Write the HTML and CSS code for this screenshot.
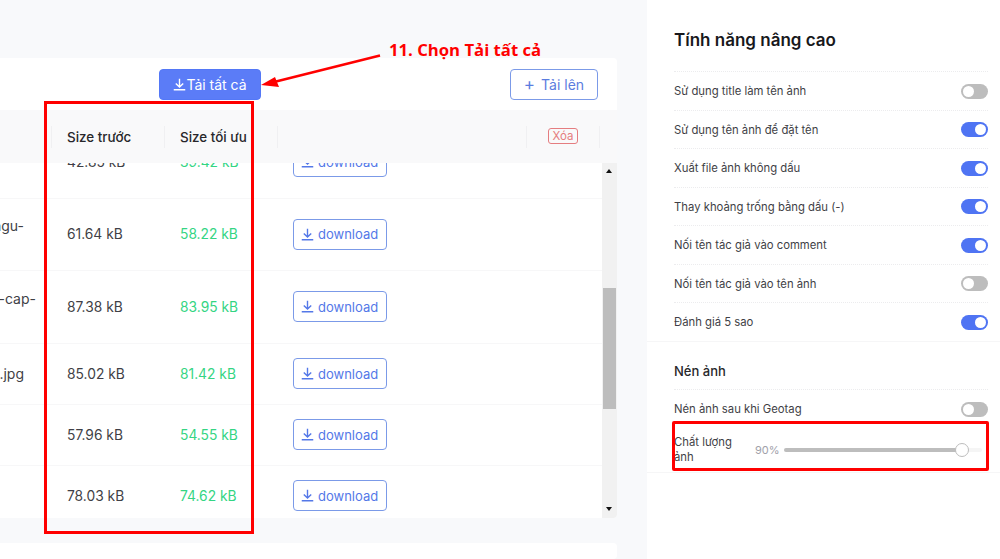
FILE: index.html
```html
<!DOCTYPE html>
<html lang="vi">
  <head>
    <meta charset="UTF-8" />
    <title>Geotag ảnh</title>
    <link rel="stylesheet" href="styles.css">
  </head>
  <body>
    <svg class="icon-defs" width="0" height="0">
      <symbol id="icon-download" viewBox="0 0 14 14">
        <path d="M7 .8v9M3 5.8l4 4 4-4M.8 12.7h12.4" fill="none" stroke="currentColor" stroke-width="1.5" />
      </symbol>
    </svg>

    <div class="page">
      <main class="main">
        <section class="card">
          <div class="toolbar">
            <button class="btn btn-primary"><svg class="icon"><use href="#icon-download" /></svg>Tải tất cả</button>
            <button class="btn btn-outline"><span class="plus">+</span>Tải lên</button>
          </div>

          <div class="table-head">
            <div class="col-name"></div>
            <div class="col-size head-cell">Size trước</div>
            <div class="col-size head-cell">Size tối ưu</div>
            <div class="col-action head-cell"></div>
            <div class="col-delete head-cell"><span class="badge-delete">Xóa</span></div>
          </div>

          <div class="table-wrap">
            <div class="table-body">
              <div class="row row-tall">
                <div class="col-name"></div>
                <div class="col-size">42.85 kB</div>
                <div class="col-size text-green">39.42 kB</div>
                <div class="col-action"><button class="btn-download"><svg class="icon"><use href="#icon-download" /></svg>download</button></div>
              </div>
              <div class="row row-tall">
                <div class="col-name name-short"><span>ngu-<br>&nbsp;</span></div>
                <div class="col-size">61.64 kB</div>
                <div class="col-size text-green">58.22 kB</div>
                <div class="col-action"><button class="btn-download"><svg class="icon"><use href="#icon-download" /></svg>download</button></div>
              </div>
              <div class="row row-tall">
                <div class="col-name name-long"><span>-cap-<br>&nbsp;</span></div>
                <div class="col-size">87.38 kB</div>
                <div class="col-size text-green">83.95 kB</div>
                <div class="col-action"><button class="btn-download"><svg class="icon"><use href="#icon-download" /></svg>download</button></div>
              </div>
              <div class="row">
                <div class="col-name name-short"><span>.jpg</span></div>
                <div class="col-size">85.02 kB</div>
                <div class="col-size text-green">81.42 kB</div>
                <div class="col-action"><button class="btn-download"><svg class="icon"><use href="#icon-download" /></svg>download</button></div>
              </div>
              <div class="row">
                <div class="col-name"></div>
                <div class="col-size">57.96 kB</div>
                <div class="col-size text-green">54.55 kB</div>
                <div class="col-action"><button class="btn-download"><svg class="icon"><use href="#icon-download" /></svg>download</button></div>
              </div>
              <div class="row">
                <div class="col-name"></div>
                <div class="col-size">78.03 kB</div>
                <div class="col-size text-green">74.62 kB</div>
                <div class="col-action"><button class="btn-download"><svg class="icon"><use href="#icon-download" /></svg>download</button></div>
              </div>
            </div>
            <div class="scrollbar">
              <span class="arrow-up"></span>
              <span class="thumb"></span>
              <span class="arrow-down"></span>
            </div>
          </div>
        </section>
        <section class="card card-next"></section>
      </main>

      <aside class="panel">
        <h2 class="panel-title">Tính năng nâng cao</h2>
        <div class="option"><span>Sử dụng title làm tên ảnh</span><span class="toggle"></span></div>
        <div class="option"><span>Sử dụng tên ảnh để đặt tên</span><span class="toggle on"></span></div>
        <div class="option"><span>Xuất file ảnh không dấu</span><span class="toggle on"></span></div>
        <div class="option"><span>Thay khoảng trống bằng dấu (-)</span><span class="toggle on"></span></div>
        <div class="option"><span>Nối tên tác giả vào comment</span><span class="toggle on"></span></div>
        <div class="option"><span>Nối tên tác giả vào tên ảnh</span><span class="toggle"></span></div>
        <div class="option"><span>Đánh giá 5 sao</span><span class="toggle on"></span></div>

        <div class="panel-section">
          <h3 class="section-title">Nén ảnh</h3>
          <div class="option option-compact"><span>Nén ảnh sau khi Geotag</span><span class="toggle"></span></div>
          <div class="quality">
            <span class="quality-label">Chất lượng ảnh</span>
            <span class="quality-value">90%</span>
            <span class="slider"><span class="slider-fill"></span><span class="slider-thumb"></span></span>
          </div>
        </div>
      </aside>
    </div>

    <!-- chu thich do ve len anh -->
    <div class="note-box note-sizes"></div>
    <div class="note-box note-quality"></div>
    <div class="note-text">11. Chọn Tải tất cả</div>
    <svg class="note-arrow" width="130" height="40" viewBox="0 0 130 40">
      <path d="M120 1.5 14 28" stroke="#f00" stroke-width="2.6" fill="none" />
      <path d="M1 31 15 23 19 33z" fill="#f00" />
    </svg>
  </body>
</html>
```

FILE: styles.css
```css
* {
  box-sizing: border-box;
}
html,
body {
  margin: 0;
  height: 559px;
  overflow: hidden;
}
body {
  font-family: Inter, "Noto Sans", sans-serif;
  font-size: 14px;
  color: #3f3f46;
  background: #f8f9fb;
}
button {
  font-family: inherit;
  cursor: pointer;
}
.icon-defs {
  position: absolute;
}
.page {
  display: flex;
  height: 559px;
}
.main {
  width: 647px;
  padding-top: 58px;
}
.card {
  width: 617px;
  height: 460px;
  background: #fff;
  border-radius: 0 4px 4px 0;
  overflow: hidden;
}
.card-next {
  height: 16px;
  margin-top: 25px;
}
.toolbar {
  display: flex;
  justify-content: space-between;
  align-items: flex-start;
  height: 52px;
  padding: 11px 19px 0 159px;
}
.btn {
  display: flex;
  align-items: center;
  justify-content: center;
  height: 31px;
  border-radius: 4px;
  font-size: 14px;
}
.btn-primary {
  width: 102px;
  border: 1px solid #5478f6;
  background: #5b7cf7;
  color: #fff;
}
.btn-primary .icon {
  width: 13px;
  height: 13px;
}
.btn-outline {
  width: 88px;
  border: 1.5px solid #7b9ae8;
  background: #fff;
  color: #5b7ce0;
}
.plus {
  margin-right: 6px;
  font-size: 17px;
  line-height: 1;
}
.table-head {
  display: flex;
  align-items: center;
  height: 53px;
  background: #f9f9fa;
  font-size: 13.4px;
  font-weight: 500;
  color: #27272a;
}
.col-name {
  flex: none;
  display: flex;
  justify-content: flex-end;
  width: 51px;
  font-size: 14px;
  white-space: nowrap;
}
.name-short {
  padding-right: 27px;
}
.name-long {
  padding-right: 15px;
}
.col-size {
  flex: none;
  width: 113px;
  padding-left: 16px;
  font-size: 13.8px;
}
.col-action {
  flex: none;
  width: 249px;
  padding-left: 16px;
}
.col-delete {
  flex: none;
  width: 74px;
  height: 22px;
  display: flex;
  align-items: center;
  justify-content: center;
  border-right: 1px solid #f0f0f2;
}
.head-cell {
  height: 22px;
  line-height: 22px;
  border-left: 1px solid #f0f0f2;
}
.col-size.head-cell {
  padding-left: 15px;
  font-size: 13.4px;
}
.badge-delete {
  margin-top: -2px;
  padding: 0 4px;
  border: 1.5px solid #e57d80;
  border-radius: 3px;
  font-size: 11.5px;
  line-height: 14px;
  font-weight: 400;
  color: #e57d80;
}
.table-wrap {
  display: flex;
  height: 355px;
  overflow: hidden;
}
.table-body {
  flex: none;
  width: 602px;
  margin-top: -37px;
}
.row {
  display: flex;
  align-items: center;
  height: 61px;
  border-bottom: 1px solid #f7f7f8;
}
.row-tall {
  height: 72.5px;
}
.text-green {
  color: #34d583;
}
.btn-download {
  display: flex;
  align-items: center;
  width: 94px;
  height: 31px;
  padding: 0 0 0 7px;
  border: 1.5px solid #7b9ae8;
  border-radius: 4px;
  background: #fff;
  color: #5478e8;
  font-size: 13px;
}
.btn-download .icon {
  width: 13px;
  height: 13px;
  margin-right: 4px;
}
.scrollbar {
  flex: none;
  position: relative;
  width: 15px;
  background: #f1f1f1;
}
.thumb {
  position: absolute;
  top: 125px;
  left: 1px;
  width: 13px;
  height: 121px;
  background: #bdbdbd;
}
.arrow-up,
.arrow-down {
  position: absolute;
  left: 4px;
  border-left: 3.5px solid transparent;
  border-right: 3.5px solid transparent;
}
.arrow-up {
  top: 6px;
  border-bottom: 4px solid #111;
}
.arrow-down {
  bottom: 7px;
  border-top: 4px solid #111;
}
.panel {
  flex: none;
  width: 353px;
  height: 559px;
  padding: 0 12px 0 27px;
  background: #fff;
}
.panel-title {
  margin: 0;
  height: 71px;
  padding-top: 28px;
  font-size: 17px;
  line-height: 24px;
  font-weight: 600;
  color: #18181b;
}
.option {
  display: flex;
  align-items: center;
  justify-content: space-between;
  height: 38.5px;
  padding-top: 1px;
  border-top: 1px dotted #ececee;
  font-size: 11.3px;
  color: #3f3f46;
}
.toggle {
  position: relative;
  width: 27px;
  height: 15px;
  border-radius: 8px;
  background: #bdbdbd;
}
.toggle::after {
  content: "";
  position: absolute;
  top: 2px;
  left: 2px;
  width: 11px;
  height: 11px;
  border-radius: 50%;
  background: #fff;
}
.toggle.on {
  background: #4f74f3;
}
.toggle.on::after {
  left: 14px;
}
.panel-section {
  margin: 0 -12px 0 -27px;
  padding: 0 12px 0 27px;
  height: 132px;
  border-top: 1px solid #f6f6f7;
  border-bottom: 1px solid #f6f6f7;
}
.section-title {
  margin: 0;
  height: 47px;
  padding-top: 20px;
  font-size: 13px;
  line-height: 19px;
  font-weight: 500;
  color: #27272a;
}
.option-compact {
  height: 39px;
}
.quality {
  display: flex;
  align-items: center;
  height: 44px;
  font-size: 11.3px;
}
.quality-label {
  flex: none;
  width: 81px;
  padding: 1px 20px 0 0;
  line-height: 15px;
}
.quality-value {
  flex: none;
  width: 29px;
  color: #a1a1aa;
  font-size: 11px;
}
.slider {
  position: relative;
  flex: none;
  width: 198px;
  height: 4px;
  border-radius: 2px;
  background: #f5f5f5;
}
.slider-fill {
  display: block;
  width: 178px;
  height: 4px;
  border-radius: 2px;
  background: #bdbdbd;
}
.slider-thumb {
  position: absolute;
  top: -5px;
  left: 171px;
  width: 14px;
  height: 14px;
  border: 1.5px solid #bdbdbd;
  border-radius: 50%;
  background: #fff;
}
.note-box {
  position: absolute;
  border: 3px solid #f00;
}
.note-sizes {
  left: 44px;
  top: 101px;
  width: 210px;
  height: 433px;
}
.note-quality {
  left: 672px;
  top: 421px;
  width: 317px;
  height: 50px;
  border-radius: 2px;
}
.note-text {
  position: absolute;
  left: 389px;
  top: 39px;
  font-family: "Open Sans", sans-serif;
  font-size: 16.7px;
  line-height: 22px;
  font-weight: 700;
  color: #f00;
}
.note-arrow {
  position: absolute;
  left: 260px;
  top: 54px;
}
```
